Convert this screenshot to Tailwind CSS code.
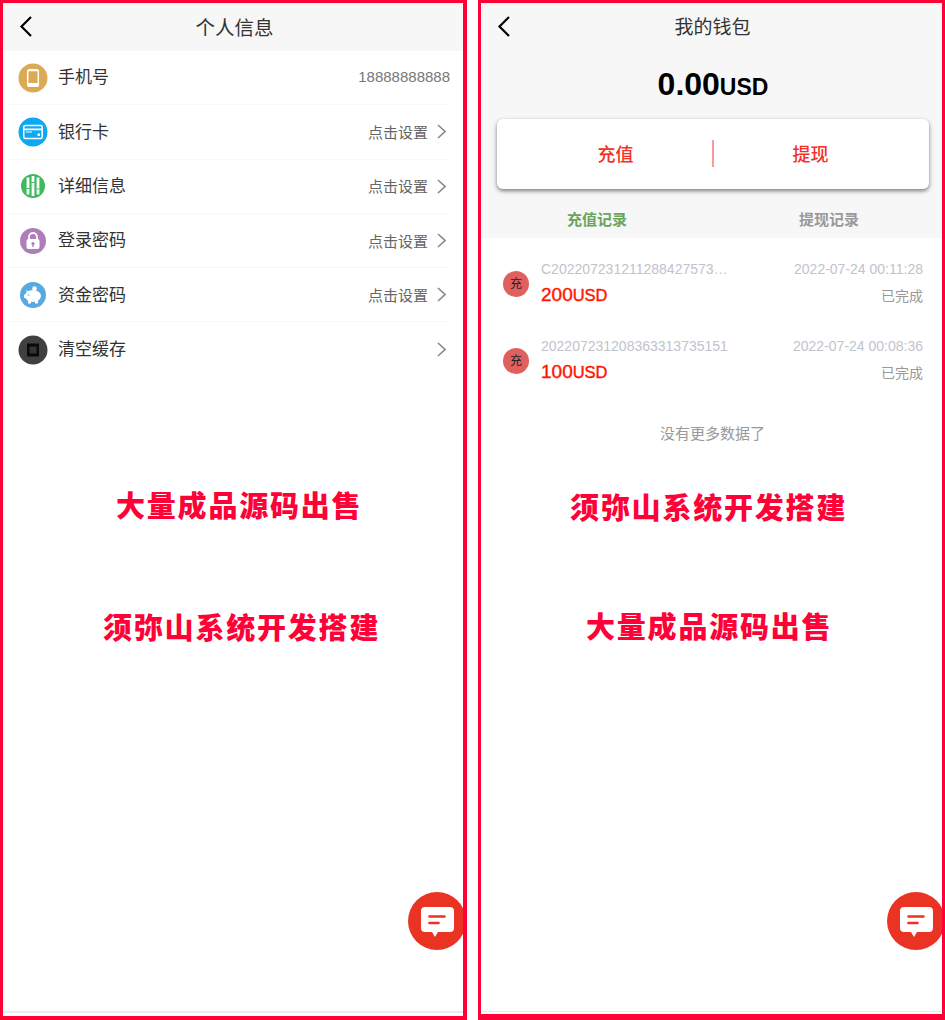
<!DOCTYPE html>
<html lang="zh-CN">
  <head>
    <meta charset="UTF-8" />
    <title>个人信息 / 我的钱包</title>
    <script src="https://cdn.jsdelivr.net/npm/@tailwindcss/browser@4"></script>
  </head>
  <body class="bg-white overflow-hidden font-['Liberation_Sans','Noto_Sans_CJK_SC',sans-serif]">
    <div class="flex justify-between w-[945px] h-[1020px]">
      <!-- Profile panel -->
      <div class="relative flex flex-col w-[467px] h-full overflow-hidden border-[#ff0037] border-t-[3px] border-l-[3px] border-r-[4px] border-b-[4px]">
        <div class="relative flex items-center justify-center h-[48px] shrink-0 pt-[3px] pl-[3px] bg-[#f7f7f7]">
          <svg class="absolute left-[15px] top-[12px]" width="16" height="22" viewBox="0 0 16 22" fill="none"><path d="M13 2 3.500 11.500 13 21" stroke="#000" stroke-width="2.200"/></svg>
          <span class="text-[19.500px] text-[#333]">个人信息</span>
        </div>
        <div class="flex items-center h-[54.3px] ml-[4px] mr-[15px] pl-[11px] border-b border-[#f7f7f7]">
          <svg class="shrink-0" width="30" height="30" viewBox="0 0 30 30"><circle cx="15" cy="15" r="14.500" fill="#dcaa55"/><rect x="9.700" y="6.800" width="10.600" height="16.500" rx="1.800" fill="none" stroke="#fff" stroke-width="1.500"/><rect x="9.700" y="20" width="10.600" height="3.300" fill="#fff"/><rect x="9.700" y="6.800" width="10.600" height="1.500" fill="#fff"/></svg>
          <span class="ml-[10px] mt-[1px] text-[17px] text-[#333]">手机号</span>
          <span class="ml-auto -mr-[2px] text-[15px] text-[#777]">18888888888</span>
        </div>
        <div class="flex items-center h-[54.3px] ml-[4px] mr-[15px] pl-[11px] border-b border-[#f7f7f7]">
          <svg class="shrink-0" width="30" height="30" viewBox="0 0 30 30"><circle cx="15" cy="15" r="14.500" fill="#0ea8f2"/><rect x="5.800" y="8.500" width="18.400" height="13" rx="1.500" fill="none" stroke="#fff" stroke-width="1.500"/><rect x="6" y="11.500" width="18" height="1.800" fill="#fff"/><rect x="8" y="14.500" width="6" height="1" fill="#fff"/><rect x="19.500" y="16.500" width="2.500" height="2.500" fill="#fff"/></svg>
          <span class="ml-[10px] mt-[1px] text-[17px] text-[#333]">银行卡</span>
          <span class="ml-auto mt-[3px] text-[15px] text-[#666]">点击设置</span>
          <svg class="ml-[9px] mr-[2px]" width="9" height="15" viewBox="0 0 9 15" fill="none"><path d="M1 1 8 7.500 1 14" stroke="#888" stroke-width="1.600"/></svg>
        </div>
        <div class="flex items-center h-[54.3px] ml-[4px] mr-[15px] pl-[11px] border-b border-[#f7f7f7]">
          <svg class="shrink-0" width="30" height="30" viewBox="0 0 30 30"><circle cx="15" cy="15" r="12" fill="#3dba5e"/><path d="M10 6.500v17M15 5v20M20 6.500v17" stroke="#fff" stroke-width="2.800"/><path d="M8.500 17.500h3M13.500 11.500h3M18.500 18h3" stroke="#3dba5e" stroke-width="1.200"/></svg>
          <span class="ml-[10px] mt-[1px] text-[17px] text-[#333]">详细信息</span>
          <span class="ml-auto mt-[3px] text-[15px] text-[#666]">点击设置</span>
          <svg class="ml-[9px] mr-[2px]" width="9" height="15" viewBox="0 0 9 15" fill="none"><path d="M1 1 8 7.500 1 14" stroke="#888" stroke-width="1.600"/></svg>
        </div>
        <div class="flex items-center h-[54.3px] ml-[4px] mr-[15px] pl-[11px] border-b border-[#f7f7f7]">
          <svg class="shrink-0" width="30" height="30" viewBox="0 0 30 30"><circle cx="15" cy="15" r="13" fill="#b07dbb"/><path d="M11 14v-3a4 4 0 0 1 8 0v3" fill="none" stroke="#fff" stroke-width="1.800"/><rect x="8.500" y="13" width="13" height="10" rx="2" fill="#fff"/><circle cx="15" cy="17.500" r="1.600" fill="#b07dbb"/><rect x="14.300" y="18" width="1.400" height="3" fill="#b07dbb"/></svg>
          <span class="ml-[10px] mt-[1px] text-[17px] text-[#333]">登录密码</span>
          <span class="ml-auto mt-[3px] text-[15px] text-[#666]">点击设置</span>
          <svg class="ml-[9px] mr-[2px]" width="9" height="15" viewBox="0 0 9 15" fill="none"><path d="M1 1 8 7.500 1 14" stroke="#888" stroke-width="1.600"/></svg>
        </div>
        <div class="flex items-center h-[54.3px] ml-[4px] mr-[15px] pl-[11px] border-b border-[#f7f7f7]">
          <svg class="shrink-0" width="30" height="30" viewBox="0 0 30 30"><circle cx="15" cy="15" r="13" fill="#58a9e2"/><ellipse cx="15" cy="16" rx="8" ry="6" fill="#fff"/><circle cx="16.500" cy="8.500" r="2.300" fill="#fff"/><path d="M8.500 10l4.500 3-4 2.500zM10 20h3v3.500h-3zM17 20h3v3.500h-3zM6 14.500h3.500v3.500H6z" fill="#fff"/><circle cx="10.500" cy="15" r=".8" fill="#58a9e2"/></svg>
          <span class="ml-[10px] mt-[1px] text-[17px] text-[#333]">资金密码</span>
          <span class="ml-auto mt-[3px] text-[15px] text-[#666]">点击设置</span>
          <svg class="ml-[9px] mr-[2px]" width="9" height="15" viewBox="0 0 9 15" fill="none"><path d="M1 1 8 7.500 1 14" stroke="#888" stroke-width="1.600"/></svg>
        </div>
        <div class="flex items-center h-[54.3px] ml-[4px] mr-[15px] pl-[11px]">
          <svg class="shrink-0" width="30" height="30" viewBox="0 0 30 30"><circle cx="15" cy="15" r="14.500" fill="#404040"/><rect x="9" y="8.500" width="12" height="13" fill="#0a0a0a"/><rect x="11.500" y="11.500" width="7" height="7" fill="#38322c"/></svg>
          <span class="ml-[10px] mt-[1px] text-[17px] text-[#333]">清空缓存</span>
          <svg class="ml-auto mr-[2px]" width="9" height="15" viewBox="0 0 9 15" fill="none"><path d="M1 1 8 7.500 1 14" stroke="#888" stroke-width="1.600"/></svg>
        </div>
        <div class="mt-auto h-[5px] border-t-2 border-[#e9ecec]"></div>

        <!-- Watermark text -->
        <div class="absolute left-[113px] top-[485px] text-[29px] leading-[38px] font-black tracking-[1.800px] text-[#ff0037] whitespace-nowrap">大量成品源码出售</div>
        <div class="absolute left-[100px] top-[607px] text-[29px] leading-[38px] font-black tracking-[1.800px] text-[#ff0037] whitespace-nowrap">须弥山系统开发搭建</div>

        <div class="absolute -right-[3px] top-[889px] w-[58px] h-[58px] rounded-full bg-[#ea3323]">
          <svg class="absolute left-0 top-0" width="58" height="58" viewBox="0 0 58 58"><path d="M17 15h25a4 4 0 0 1 4 4v17a4 4 0 0 1-4 4H30l-3 5-3-5h-7a4 4 0 0 1-4-4V19a4 4 0 0 1 4-4z" fill="#fff"/><path d="M21.500 24.500h15M21.500 31h9" stroke="#ea3323" stroke-width="2.600" stroke-linecap="round"/></svg>
        </div>
      </div>

      <!-- Wallet panel -->
      <div class="relative flex flex-col w-[467px] h-full overflow-hidden border-[#ff0037] border-t-[3px] border-x-[3px] border-b-[6px]">
        <div class="bg-[#f7f7f7] h-[235px] shrink-0 flex flex-col items-center">
          <div class="relative flex items-center justify-center w-full h-[48px] pt-[3px] pl-[2px]">
            <svg class="absolute left-[15px] top-[12px]" width="16" height="22" viewBox="0 0 16 22" fill="none"><path d="M13 2 3.500 11.500 13 21" stroke="#000" stroke-width="2.200"/></svg>
            <span class="text-[19px] text-[#333]">我的钱包</span>
          </div>
          <div class="flex items-baseline h-[36px] mt-[15px] ml-[3px] leading-[36px] font-bold text-black">
            <span class="text-[32px]">0.00</span><span class="text-[23px]">USD</span>
          </div>
          <div class="relative grid grid-cols-2 items-center w-[432px] h-[70px] mt-[17px] ml-[2px] px-5 rounded-md bg-white shadow-[0_2px_4px_rgba(0,0,0,0.5)]">
            <span class="pt-[3px] pl-[2px] text-center text-[18px] font-medium text-[#f5302a]">充值</span>
            <span class="pt-[3px] text-center text-[18px] font-medium text-[#f5302a]">提现</span>
            <span class="absolute left-[215px] top-[21px] w-[2px] h-[27px] bg-[#f79a9a]"></span>
          </div>
          <div class="grid grid-cols-[232px_232px] self-start mt-[20px] text-center text-[15px] font-bold leading-[22px]">
            <span class="text-[#6aa55c]">充值记录</span>
            <span class="text-[#999]">提现记录</span>
          </div>
        </div>

        <div class="flex items-center h-[77px] mt-[7px] pl-[22px] pr-[19px]">
          <span class="flex items-center justify-center w-[26px] h-[26px] shrink-0 rounded-full bg-[#e06060] text-[12px] text-[#222]">充</span>
          <div class="ml-[12px] w-[188px]">
            <p class="mt-[1px] whitespace-nowrap text-[14px] leading-[20px] text-[#c0c4cc]">C202207231211288427573…</p>
            <p class="mt-[3px] leading-[26px] text-[#ff1500] [-webkit-text-stroke:0.4px_#ff1500]"><span class="text-[19px]">200</span><span class="text-[16.500px]">USD</span></p>
          </div>
          <div class="ml-auto mb-[3px] text-right text-[14px]">
            <p class="leading-[20px] text-[#c0c4cc]">2022-07-24 00:11:28</p>
            <p class="mt-[7px] leading-[20px] text-[#999]">已完成</p>
          </div>
        </div>
        <div class="flex items-center h-[77px] pl-[22px] pr-[19px]">
          <span class="flex items-center justify-center w-[26px] h-[26px] shrink-0 rounded-full bg-[#e06060] text-[12px] text-[#222]">充</span>
          <div class="ml-[12px] w-[188px]">
            <p class="mt-[1px] whitespace-nowrap text-[14px] leading-[20px] text-[#c0c4cc]">202207231208363313735151</p>
            <p class="mt-[3px] leading-[26px] text-[#ff1500] [-webkit-text-stroke:0.4px_#ff1500]"><span class="text-[19px]">100</span><span class="text-[16.500px]">USD</span></p>
          </div>
          <div class="ml-auto mb-[3px] text-right text-[14px]">
            <p class="leading-[20px] text-[#c0c4cc]">2022-07-24 00:08:36</p>
            <p class="mt-[7px] leading-[20px] text-[#999]">已完成</p>
          </div>
        </div>
        <p class="mt-[24px] ml-[2px] text-center text-[15px] leading-[22px] text-[#999]">没有更多数据了</p>
        <div class="mt-auto h-[3px] border-t border-[#eceeee]"></div>

        <!-- Watermark text -->
        <div class="absolute left-[89px] top-[487px] text-[29px] leading-[38px] font-black tracking-[1.800px] text-[#ff0037] whitespace-nowrap">须弥山系统开发搭建</div>
        <div class="absolute left-[105px] top-[606px] text-[29px] leading-[38px] font-black tracking-[1.800px] text-[#ff0037] whitespace-nowrap">大量成品源码出售</div>

        <div class="absolute -right-[3px] top-[889px] w-[58px] h-[58px] rounded-full bg-[#ea3323]">
          <svg class="absolute left-0 top-0" width="58" height="58" viewBox="0 0 58 58"><path d="M17 15h25a4 4 0 0 1 4 4v17a4 4 0 0 1-4 4H30l-3 5-3-5h-7a4 4 0 0 1-4-4V19a4 4 0 0 1 4-4z" fill="#fff"/><path d="M21.500 24.500h15M21.500 31h9" stroke="#ea3323" stroke-width="2.600" stroke-linecap="round"/></svg>
        </div>
      </div>
    </div>
  </body>
</html>
